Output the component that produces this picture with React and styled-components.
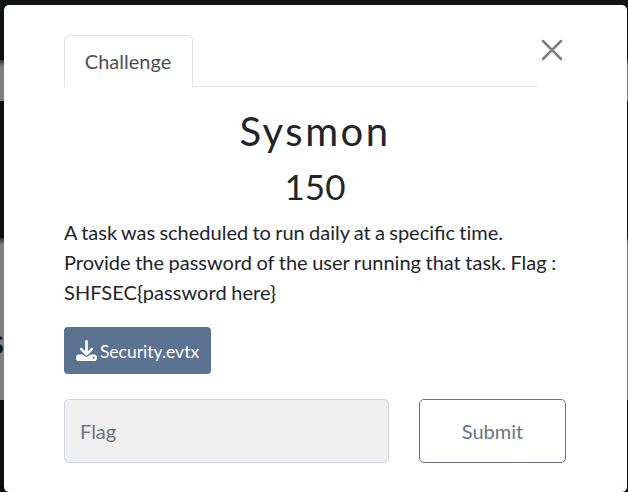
import React from "react";
import styled, { createGlobalStyle } from "styled-components";
import { FaDownload } from "react-icons/fa6";

const GlobalStyle = createGlobalStyle`
  *, *::before, *::after { box-sizing: border-box; }
  body {
    margin: 0;
    overflow: hidden;
    font-family: Lato, "Liberation Sans", sans-serif;
    font-size: 20px;
    line-height: 1.5;
    color: #212529;
  }
`;

const Page = styled.div`
  display: grid;
  width: 628px;
  height: 492px;
  overflow: hidden;
  background: #0f0e0d;
  & > * { grid-area: 1 / 1; }
`;

const Backdrop = styled.div`
  display: grid;
  grid-template-rows: 60px 41px 137px 162px 1fr;
  background: linear-gradient(#121416, #0f0e0d 60px);
`;

const Band = styled.div`
  grid-row: ${({ $row }) => $row};
  background: linear-gradient(#343332, #80807f 7px);
`;

const Letter = styled.div`
  margin: 89px 0 0 -10px;
  font-size: 25px;
  line-height: 34px;
  color: #061522;
  -webkit-text-stroke: 0.6px #061522;
`;

const Modal = styled.main`
  margin: 5px 1px 0 4px;
  height: 487px;
  padding: 30px 61px 0 60px;
  border-radius: 5px;
  background: #fff;
`;

const Header = styled.header`
  display: flex;
  align-items: flex-start;
  height: 52px;
`;

const Tabs = styled.nav`
  display: flex;
  width: 473px;
  height: 52px;
  border-bottom: 1px solid #dee2e6;
`;

const Tab = styled.button`
  width: 129px;
  height: 52px;
  padding: 0 1px 1px 0;
  border: 1px solid #dee2e6;
  border-bottom-color: #fff;
  border-radius: 5px 5px 0 0;
  background: #fff;
  font: inherit;
  color: #495057;
`;

const CloseButton = styled.button`
  display: flex;
  margin: 4px 0 0 4px;
  padding: 0;
  border: 0;
  background: none;
  color: #7f7f7f;
`;

const Title = styled.h2`
  margin: 20px 0 0;
  font-size: 40px;
  font-weight: 400;
  line-height: 48px;
  letter-spacing: 2.5px;
  text-align: center;
`;

const Points = styled.h3`
  margin: 10px 0 0;
  font-size: 35px;
  font-weight: 400;
  line-height: 42px;
  text-align: center;
`;

const Description = styled.p`
  margin: 10px 0 0;
  word-spacing: -0.85px;
`;

const PlainLetters = styled.span`
  font-variant-ligatures: none;
`;

const Instruction = styled.span`
  word-spacing: -0.62px;
`;

const FlagFormat = styled.span`
  letter-spacing: 0.08px;
`;

const Download = styled.button`
  display: flex;
  align-items: center;
  justify-content: center;
  gap: 3px;
  width: 147px;
  height: 47px;
  margin: 20px 0 25px;
  padding: 3px 0 0;
  border: 0;
  border-radius: 4px;
  background: #5b7290;
  color: #fff;
  font: inherit;
  font-size: 17.5px;
  svg { flex: none; margin-top: -3px; }
`;

const AnswerRow = styled.form`
  display: grid;
  grid-template-columns: 325px 147px;
  column-gap: 30px;
  height: 64px;
`;

const FlagInput = styled.input`
  width: 100%;
  height: 64px;
  padding: 0 15px;
  border: 1px solid #ced4da;
  border-radius: 5px;
  background: #efefef;
  font: inherit;
  &::placeholder { color: #6c757d; opacity: 1; }
`;

const Submit = styled.button`
  padding: 0;
  border: 1px solid #6c757d;
  border-radius: 5px;
  background: #fff;
  color: #6c757d;
  font: inherit;
`;

export default function App() {
  return (
    <>
      <GlobalStyle />
      <Page>
        <Backdrop>
          <Band $row={2} />
          <Band $row={4}>
            <Letter>S</Letter>
          </Band>
        </Backdrop>
        <Modal>
          <Header>
            <Tabs>
              <Tab type="button">Challenge</Tab>
            </Tabs>
            <CloseButton type="button" aria-label="Close">
              <svg width="22" height="22" viewBox="0 0 22 22" fill="none" stroke="currentColor" strokeWidth="2.5" strokeLinecap="round">
                <path d="M2 2l18 18M20 2L2 20" />
              </svg>
            </CloseButton>
          </Header>
          <Title>Sysmon</Title>
          <Points>150</Points>
          <Description>
            A task was scheduled to run daily at a specific{" "}
            <PlainLetters>time.</PlainLetters>
            <br />
            <Instruction>
              Provide the password of the user running that task. Flag :
            </Instruction>
            <br />
            <FlagFormat>{"SHFSEC{password here}"}</FlagFormat>
          </Description>
          <Download type="button">
            <FaDownload size={21} />
            Security.evtx
          </Download>
          <AnswerRow>
            <FlagInput placeholder="Flag" />
            <Submit type="button">Submit</Submit>
          </AnswerRow>
        </Modal>
      </Page>
    </>
  );
}
